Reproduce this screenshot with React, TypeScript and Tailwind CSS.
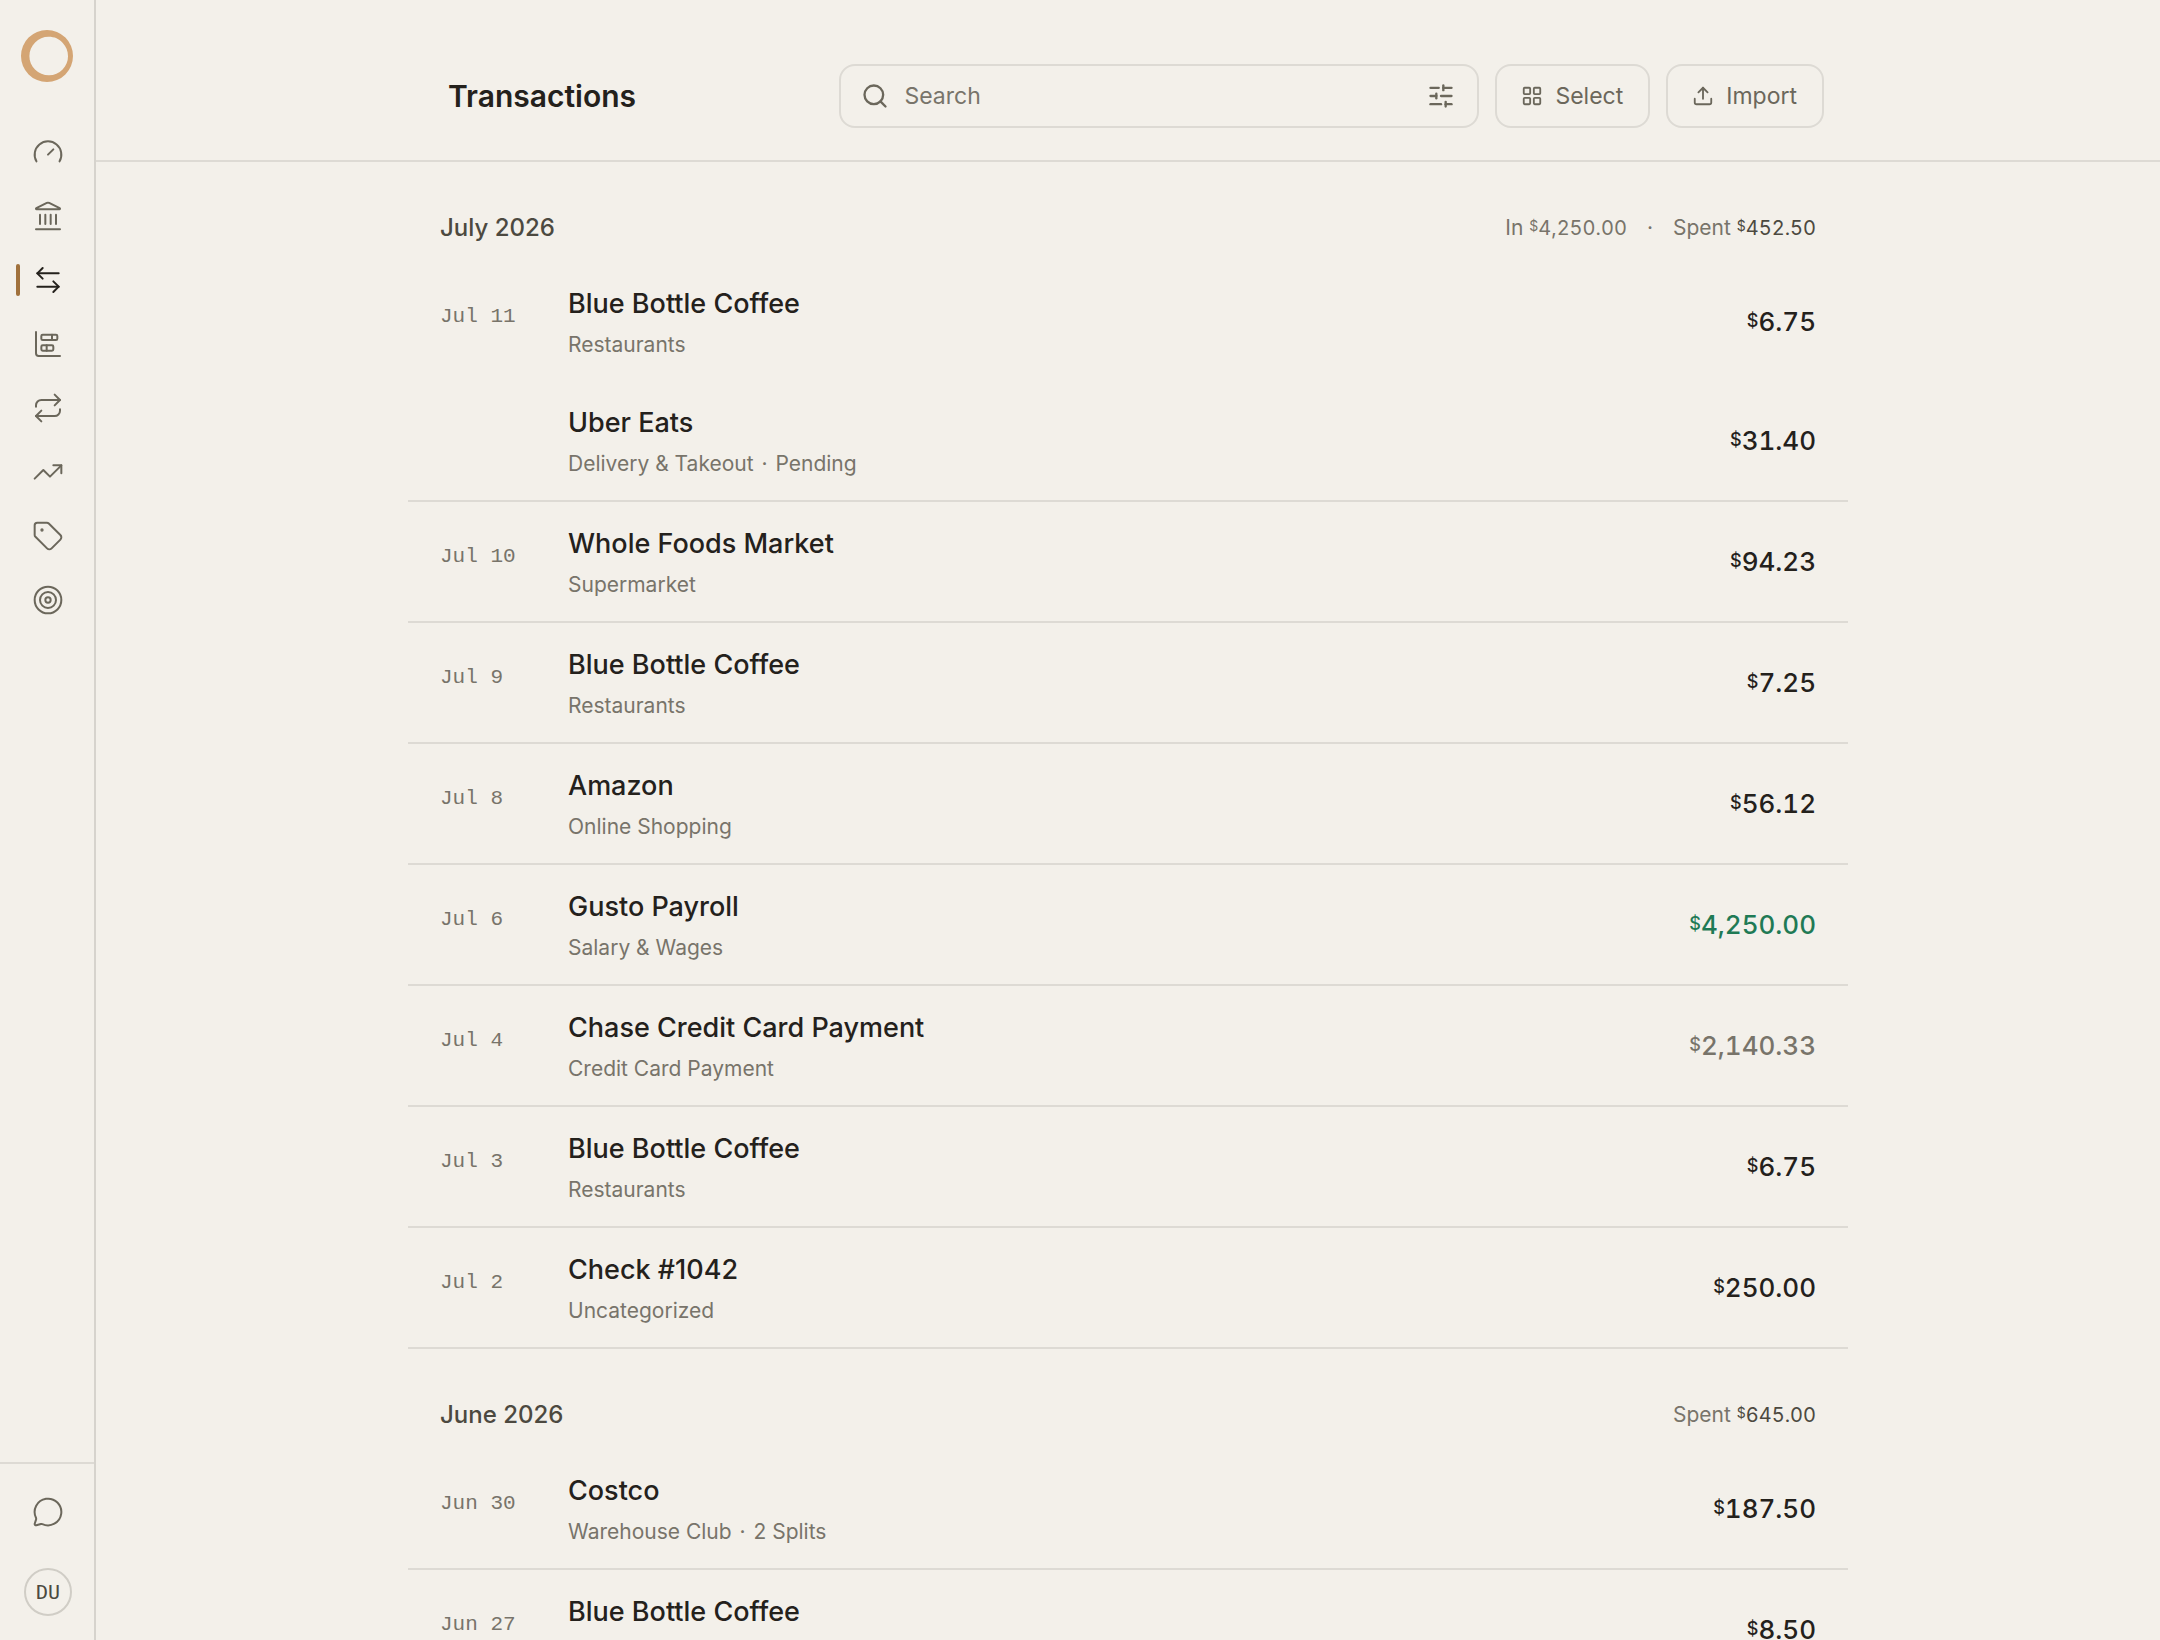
import type { ReactNode } from "react";
import {
  ArrowLeftRight,
  ChartBarStacked,
  Gauge,
  Landmark,
  LayoutGrid,
  MessageCircle,
  Repeat,
  Search,
  SlidersHorizontal,
  Tag,
  Target,
  TrendingUp,
  Upload,
} from "lucide-react";

type Tone = "expense" | "income" | "transfer";
type Transaction = { name: string; category: string; note?: string; amount: string; tone?: Tone };
type Day = { date: string; items: Transaction[] };
type Month = { title: string; income?: string; spent: string; days: Day[] };

const months: Month[] = [
  {
    title: "July 2026",
    income: "4,250.00",
    spent: "452.50",
    days: [
      {
        date: "Jul 11",
        items: [
          { name: "Blue Bottle Coffee", category: "Restaurants", amount: "6.75" },
          { name: "Uber Eats", category: "Delivery & Takeout", note: "Pending", amount: "31.40" },
        ],
      },
      { date: "Jul 10", items: [{ name: "Whole Foods Market", category: "Supermarket", amount: "94.23" }] },
      { date: "Jul 9", items: [{ name: "Blue Bottle Coffee", category: "Restaurants", amount: "7.25" }] },
      { date: "Jul 8", items: [{ name: "Amazon", category: "Online Shopping", amount: "56.12" }] },
      { date: "Jul 6", items: [{ name: "Gusto Payroll", category: "Salary & Wages", amount: "4,250.00", tone: "income" }] },
      {
        date: "Jul 4",
        items: [{ name: "Chase Credit Card Payment", category: "Credit Card Payment", amount: "2,140.33", tone: "transfer" }],
      },
      { date: "Jul 3", items: [{ name: "Blue Bottle Coffee", category: "Restaurants", amount: "6.75" }] },
      { date: "Jul 2", items: [{ name: "Check #1042", category: "Uncategorized", amount: "250.00" }] },
    ],
  },
  {
    title: "June 2026",
    spent: "645.00",
    days: [
      { date: "Jun 30", items: [{ name: "Costco", category: "Warehouse Club", note: "2 Splits", amount: "187.50" }] },
      { date: "Jun 27", items: [{ name: "Blue Bottle Coffee", category: "Restaurants", amount: "8.50" }] },
    ],
  },
];

const toneClass: Record<Tone, string> = {
  expense: "text-[#24211c]",
  income: "text-[#1f7a55]",
  transfer: "text-[#78746a]",
};

const navItems = [
  { label: "Dashboard", Icon: Gauge },
  { label: "Accounts", Icon: Landmark },
  { label: "Transactions", Icon: ArrowLeftRight, active: true },
  { label: "Reports", Icon: ChartBarStacked },
  { label: "Recurring", Icon: Repeat },
  { label: "Investments", Icon: TrendingUp },
  { label: "Categories", Icon: Tag },
  { label: "Goals", Icon: Target },
];

function Logo() {
  return (
    <svg viewBox="0 0 64 64" className="size-16" aria-hidden="true">
      <path
        fill="#d4a574"
        fillRule="evenodd"
        d="M31 6a26 26 0 1 0 0 52a26 26 0 1 0 0-52ZM32.6 12.8c6 0 10.500 2 14.200 6.200c3.400 3.800 5.200 8 5.200 13.200c0 5-1.800 9.500-5.400 13.200c-3.600 3.800-8.400 5.900-13.600 5.900c-5.400 0-10.200-2-14-5.800c-3.800-3.800-5.600-8.400-5.600-13.500c0-5.300 2-9.900 5.700-13.600c3.700-3.600 8.300-5.600 13.500-5.600Z"
      />
    </svg>
  );
}

function Sidebar() {
  return (
    <aside className="flex w-24 shrink-0 flex-col border-r-2 border-[#d6d3cd]">
      <a href="#home" aria-label="Home" className="mt-6 ml-4 block size-16">
        <Logo />
      </a>
      <nav aria-label="Main" className="mt-10 flex flex-col gap-4">
        {navItems.map(({ label, Icon, active }) => (
          <a
            key={label}
            href={`#${label.toLowerCase()}`}
            aria-label={label}
            aria-current={active ? "page" : undefined}
            className={
              active
                ? "relative flex h-12 items-center pl-8 text-[#24211c]"
                : "relative flex h-12 items-center pl-8 text-[#6b675b]"
            }
          >
            {active && <span className="absolute left-4 h-8 w-1 rounded-xs bg-[#a0713c]" />}
            <Icon size={32} strokeWidth={1.5} />
          </a>
        ))}
      </nav>
      <div className="mt-auto flex flex-col gap-8 border-t-2 border-[#dddad4] pt-6 pb-6">
        <button type="button" aria-label="Messages" className="flex h-12 items-center pl-8 text-[#6b675b]">
          <MessageCircle size={32} strokeWidth={1.5} />
        </button>
        <button
          type="button"
          aria-label="Account"
          className="ml-6 flex size-12 items-center justify-center rounded-full border-2 border-[#d0cdc6] font-['DejaVu_Sans_Mono',monospace] text-[20px] leading-none text-[#4c4940]"
        >
          DU
        </button>
      </div>
    </aside>
  );
}

function ToolbarButton({ icon, children }: { icon: ReactNode; children: ReactNode }) {
  return (
    <button
      type="button"
      className="flex h-16 items-center gap-3 rounded-2xl border-2 border-[#dddad4] pr-[25px] pl-6 text-[23px] text-[#6b675b]"
    >
      {icon}
      {children}
    </button>
  );
}

function Header() {
  return (
    <header className="border-b-2 border-[#dddad4] px-6 pt-16 pb-8">
      <div className="mx-auto flex max-w-[1392px] items-center gap-4">
        <h1 className="mr-auto pl-4 text-[30px] font-semibold text-[#24211c]">Transactions</h1>
        <div className="flex h-16 w-[640px] items-center rounded-2xl border-2 border-[#dddad4] pr-[22px] pl-5 text-[#6b675b]">
          <Search size={28} strokeWidth={2} className="shrink-0" />
          <input
            type="text"
            aria-label="Search transactions"
            placeholder="Search"
            className="ml-[15px] min-w-0 flex-1 bg-transparent text-[23px] outline-none placeholder:text-[#78746a]"
          />
          <button type="button" aria-label="Filters">
            <SlidersHorizontal size={28} strokeWidth={2} />
          </button>
        </div>
        <ToolbarButton icon={<LayoutGrid size={22} strokeWidth={2} />}>Select</ToolbarButton>
        <ToolbarButton icon={<Upload size={22} strokeWidth={2} />}>Import</ToolbarButton>
      </div>
    </header>
  );
}

function SummaryAmount({ value }: { value: string }) {
  return (
    <span className="flex items-center text-[20px] tabular-nums">
      <span className="pb-1 text-[14px] leading-none">$</span>
      {value}
    </span>
  );
}

function Row({ date, item }: { date?: string; item: Transaction }) {
  return (
    <div className="flex min-h-[119px] items-center px-8">
      <div className="w-32 shrink-0 self-start pt-[41px] font-['Liberation_Mono',monospace] text-[21px] leading-7 text-[#78746a]">
        {date}
      </div>
      <div className="flex-1 pt-0.5">
        <div className="text-[27px] leading-9 font-medium text-[#24211c]">{item.name}</div>
        <div className="mt-2 text-[21px] leading-[30px] text-[#78746a]">
          {item.category}
          {item.note && (
            <>
              {" "}
              <span className="mx-0.5">·</span> {item.note}
            </>
          )}
        </div>
      </div>
      <div
        className={`flex items-center text-[26px] font-medium tabular-nums ${toneClass[item.tone ?? "expense"]}`}
      >
        <span className="pb-0.5 text-[18px] leading-none">$</span>
        {item.amount}
      </div>
    </div>
  );
}

function MonthSection({ month }: { month: Month }) {
  return (
    <section>
      <div className="flex items-center justify-between px-8 pt-12 pb-4 leading-9">
        <h2 className="text-[24px] font-medium text-[#4c4940]">{month.title}</h2>
        <div className="flex items-center gap-5 text-[21px] text-[#78746a]">
          {month.income && (
            <>
              <span className="flex items-center gap-1.5">
                In <SummaryAmount value={month.income} />
              </span>
              <span>·</span>
            </>
          )}
          <span className="flex items-center gap-1.5">
            Spent
            <span className="text-[#4c4940]">
              <SummaryAmount value={month.spent} />
            </span>
          </span>
        </div>
      </div>
      <ul>
        {month.days.map((day) => (
          <li key={day.date} className="border-b-2 border-[#dddad4]">
            {day.items.map((item, index) => (
              <Row key={item.name} date={index === 0 ? day.date : undefined} item={item} />
            ))}
          </li>
        ))}
      </ul>
    </section>
  );
}

export default function App() {
  return (
    <div className="flex h-screen overflow-hidden bg-[#f3f0ea] font-['Inter',sans-serif] text-[#24211c]">
      <Sidebar />
      <div className="flex min-w-0 flex-1 flex-col">
        <Header />
        <main className="min-h-0 flex-1 overflow-hidden">
          <div className="mx-auto max-w-[1440px]">
            {months.map((month) => (
              <MonthSection key={month.title} month={month} />
            ))}
          </div>
        </main>
      </div>
    </div>
  );
}
